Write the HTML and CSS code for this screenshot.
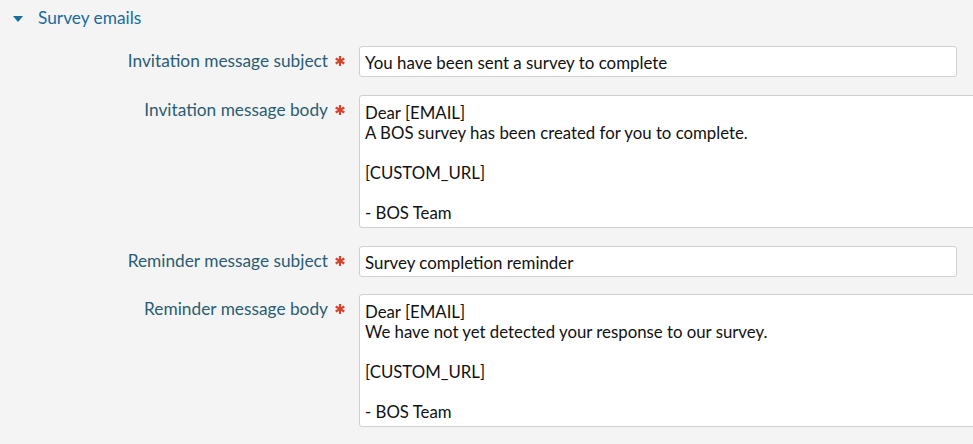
FILE: index.html
```html
<!DOCTYPE html>
<html>
<head>
<meta charset="utf-8">
<link rel="stylesheet" href="styles.css">
</head>
<body>
<div class="section">
  <div class="section-head">
    <svg class="caret" width="10" height="6" viewBox="0 0 10 6"><path d="M0 0H10L5 6Z" fill="#176ba0"/></svg>
    <span class="section-title">Survey emails</span>
  </div>
  <div class="form">
    <div class="row">
      <div class="label label-mid"><span>Invitation message subject</span><svg class="req" width="10" height="10" viewBox="0 0 10 10"><g stroke="#d9432f" stroke-width="2.2"><line x1="5" y1="0" x2="5" y2="10"/><line x1="0.7" y1="2.5" x2="9.3" y2="7.5"/><line x1="0.7" y1="7.5" x2="9.3" y2="2.5"/></g></svg></div>
      <input class="field" type="text" value="You have been sent a survey to complete">
    </div>
    <div class="row">
      <div class="label label-top"><span>Invitation message body</span><svg class="req" width="10" height="10" viewBox="0 0 10 10"><g stroke="#d9432f" stroke-width="2.2"><line x1="5" y1="0" x2="5" y2="10"/><line x1="0.7" y1="2.5" x2="9.3" y2="7.5"/><line x1="0.7" y1="7.5" x2="9.3" y2="2.5"/></g></svg></div>
      <textarea class="area">Dear [EMAIL]
A BOS survey has been created for you to complete.

[CUSTOM_URL]

- BOS Team</textarea>
    </div>
    <div class="row row-tight">
      <div class="label label-mid"><span>Reminder message subject</span><svg class="req" width="10" height="10" viewBox="0 0 10 10"><g stroke="#d9432f" stroke-width="2.2"><line x1="5" y1="0" x2="5" y2="10"/><line x1="0.7" y1="2.5" x2="9.3" y2="7.5"/><line x1="0.7" y1="7.5" x2="9.3" y2="2.5"/></g></svg></div>
      <input class="field" type="text" value="Survey completion reminder">
    </div>
    <div class="row">
      <div class="label label-top"><span>Reminder message body</span><svg class="req" width="10" height="10" viewBox="0 0 10 10"><g stroke="#d9432f" stroke-width="2.2"><line x1="5" y1="0" x2="5" y2="10"/><line x1="0.7" y1="2.5" x2="9.3" y2="7.5"/><line x1="0.7" y1="7.5" x2="9.3" y2="2.5"/></g></svg></div>
      <textarea class="area">Dear [EMAIL]
We have not yet detected your response to our survey.

[CUSTOM_URL]

- BOS Team</textarea>
    </div>
  </div>
</div>
</body>
</html>
```

FILE: styles.css
```css
html, body {
  margin: 0;
  padding: 0;
  background: #f4f4f4;
  overflow: hidden;
}
body {
  font-family: Lato, "Open Sans", sans-serif;
  font-size: 17.3px;
  width: 973px;
  height: 444px;
}
.section-head {
  height: 36px;
  display: flex;
  align-items: center;
  padding-left: 13px;
}
.caret {
  display: block;
  margin-top: 1px;
}
.section-title {
  margin-left: 15px;
  color: #176ba0;
  line-height: 20px;
}
.form {
  padding-top: 10px;
}
.row {
  display: flex;
  align-items: flex-start;
  margin-bottom: 18px;
}
.row-tight {
  margin-bottom: 17px;
}
.label {
  width: 345px;
  flex: none;
  display: flex;
  justify-content: flex-end;
  align-items: center;
  color: #2a5d74;
  line-height: 20px;
}
.label-mid {
  height: 30px;
}
.label-top {
  padding-top: 5px;
}
.req {
  margin-left: 7px;
  display: block;
}
.field {
  margin: 0 0 0 14px;
  box-sizing: border-box;
  width: 598px;
  height: 31px;
  padding: 1px 5px 0;
  border: 1px solid #cfcfcf;
  border-radius: 3px;
  background: #fff;
  font-family: Lato, "Open Sans", sans-serif;
  font-size: 16.9px;
  color: #111;
  outline: none;
}
.area {
  margin: 0 0 0 14px;
  box-sizing: border-box;
  width: 640px;
  flex: none;
  height: 133px;
  padding: 7px 5px 5px;
  border: 1px solid #cfcfcf;
  border-radius: 3px;
  background: #fff;
  font-family: Lato, "Open Sans", sans-serif;
  font-size: 16.8px;
  line-height: 20px;
  color: #111;
  resize: none;
  overflow: hidden;
  outline: none;
  display: block;
}
```
